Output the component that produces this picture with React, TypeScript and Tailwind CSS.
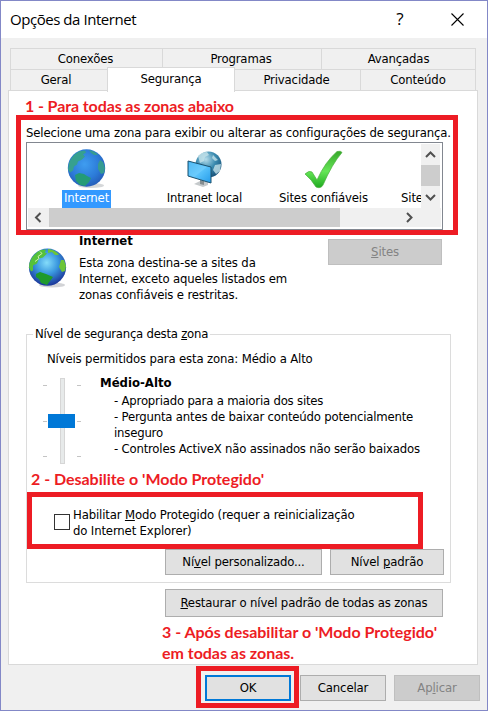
import type { ReactNode } from "react";

const UI = "font-['DejaVu_Sans_Condensed','DejaVu_Sans',sans-serif] [font-stretch:condensed] tracking-[-0.15px]";

function Button({ className, children }: { className: string; children: ReactNode }) {
  return (
    <button className={`flex shrink-0 items-center justify-center whitespace-nowrap border ${className}`}>
      {children}
    </button>
  );
}

function Tab({ className, children }: { className: string; children: ReactNode }) {
  return (
    <div className={`flex h-full items-center justify-center border-[#d9d9d9] ${className}`}>{children}</div>
  );
}

function BlueGlobe() {
  return (
    <svg width="40" height="40" viewBox="0 0 40 40">
      <defs>
        <radialGradient id="sea" cx=".45" cy=".4" r=".65">
          <stop offset="0" stopColor="#3f9df0" />
          <stop offset=".6" stopColor="#2c7bd8" />
          <stop offset="1" stopColor="#2458b4" />
        </radialGradient>
      </defs>
      <ellipse cx="24" cy="36.500" rx="13" ry="2.500" fill="#b9bcc0" opacity=".6" />
      <circle cx="19.500" cy="19" r="18.700" fill="url(#sea)" />
      <path d="M2 14Q5 6 12 2.500l6-1 1 2-3 2 2 2-3 3-4 2-1 3-3 2-1 4-3 2-2-3Z" fill="#36a08f" />
      <path d="M22 1q6 1 9 5l-4 0-3-2ZM33 11l3 2 2 6-1 5-3 1-3-5v-5Z" fill="#359b91" />
      <path d="M8 26l4-2 5 1 3 2 4 2-2 4-4 4-5-1-4-4Z" fill="#249b76" />
    </svg>
  );
}

function GreenGlobe() {
  return (
    <svg width="40" height="40" viewBox="0 0 40 40">
      <defs>
        <radialGradient id="ocean" cx=".48" cy=".38" r=".6">
          <stop offset="0" stopColor="#84dcfa" />
          <stop offset=".5" stopColor="#3a98df" />
          <stop offset="1" stopColor="#1c3a9c" />
        </radialGradient>
      </defs>
      <ellipse cx="24" cy="37" rx="13" ry="2.500" fill="#b4b6ba" opacity=".6" />
      <circle cx="19.500" cy="19.200" r="18.600" fill="url(#ocean)" />
      <path d="M1.500 15Q5 5 13 2l5-.5-1 3 2 1-4 4-4 1-2 5-4 2 0 5-2 1-2-4Z" fill="#55c13b" />
      <path d="M20 1q8 1 11 6l-4 0-3-3-4 1ZM33 12l3 0 2 6-1 5-3 1-3-5Z" fill="#6cc537" />
      <path d="M8 26l4-2 6 2 7 3-3 4-3 4-6-2-2-4-3-2Z" fill="#1f9a2c" />
      <path d="M12 3.500l2 2-4 3 1 2-4 3" fill="none" stroke="#d2eeb0" strokeWidth="1" />
    </svg>
  );
}

function IntranetIcon() {
  return (
    <svg width="36" height="37" viewBox="0 0 36 37">
      <defs>
        <radialGradient id="net" cx=".4" cy=".3" r=".75">
          <stop offset="0" stopColor="#b5dcea" />
          <stop offset=".5" stopColor="#3b8bb0" />
          <stop offset="1" stopColor="#164e76" />
        </radialGradient>
        <linearGradient id="screen" x1="0" y1="0" x2="1" y2="1">
          <stop offset="0" stopColor="#38adf0" />
          <stop offset=".5" stopColor="#5cc5fc" />
          <stop offset="1" stopColor="#249be9" />
        </linearGradient>
      </defs>
      <circle cx="21.500" cy="13.500" r="13" fill="url(#net)" />
      <path d="M11 5q4-4 9-4l2 3-4 2-1 4-4 2ZM26 4l5 5-3 1-3-3ZM28 14l6-1-1 7-4 3-3-4Z" fill="#c4e2ea" opacity=".8" />
      <path d="M7 33l8-4 6 2v3l-5 2Z" fill="#c5c9cb" />
      <path d="M13 29v4l4 1v-4Z" fill="#858d90" />
      <path d="M1 10l23 6v16L1 25Z" fill="url(#screen)" stroke="#1c526f" />
      <path d="M2 11l18 5L7 26l-5-2Z" fill="#9adeff" opacity=".25" />
    </svg>
  );
}

function CheckIcon() {
  return (
    <svg width="39" height="39" viewBox="0 0 39 39">
      <defs>
        <linearGradient id="check" x1="0" y1="0" x2="0" y2="1">
          <stop offset="0" stopColor="#36a72b" />
          <stop offset=".55" stopColor="#66e657" />
          <stop offset="1" stopColor="#1faa20" />
        </linearGradient>
      </defs>
      <path d="M1 24q4-4 7-2l5 8Q21 12 33 1.500q4-1 5 1Q28 14 19 35q-2 4-7 2Q8 30 1 24Z" fill="url(#check)" stroke="#4bae3e" strokeWidth=".7" />
    </svg>
  );
}

function Chevron({ d }: { d: string }) {
  return (
    <svg width="11" height="11" viewBox="0 0 11 11" fill="none" stroke="#505050" strokeWidth="2">
      <path d={d} />
    </svg>
  );
}

function Zone({ className, icon, label, selected }: { className: string; icon: ReactNode; label: string; selected?: boolean }) {
  return (
    <div className={`flex shrink-0 flex-col items-center ${className}`}>
      <div className="flex h-[46px] items-center pt-1">{icon}</div>
      <span className={`h-[18px] whitespace-nowrap px-[2px] leading-[16px] ${selected ? "bg-[#3399ff] text-white" : ""}`}>
        {label}
      </span>
    </div>
  );
}

function ZoneList() {
  return (
    <div className="mt-px ml-[17px] flex h-[88px] w-[417px] flex-col border border-[#828790] bg-white p-px">
      <div className="flex h-[64px]">
        <div className="flex w-[393px] overflow-hidden">
          <Zone className="w-[117px]" icon={<BlueGlobe />} label="Internet" selected />
          <Zone className="w-[119px]" icon={<IntranetIcon />} label="Intranet local" />
          <Zone className="w-[119px]" icon={<CheckIcon />} label="Sites confiáveis" />
          <Zone className="ml-[16px] w-[90px] !items-start" icon={null} label="Sites" />
        </div>
        <div className="flex w-[19px] flex-col bg-[#f0f0f0]">
          <div className="flex h-[21px] items-center justify-center"><Chevron d="M1 8l4.500-4.500L10 8" /></div>
          <div className="h-[21px] bg-[#cdcdcd]" />
          <div className="flex h-[22px] items-center justify-center"><Chevron d="M1 3l4.500 4.500L10 3" /></div>
        </div>
      </div>
      <div className="flex h-[19px] bg-[#f0f0f0]">
        <div className="flex w-[21px] items-center justify-center"><Chevron d="M7.500 1L3 5.500L7.500 10" /></div>
        <div className="w-[291px] bg-[#cdcdcd]" />
        <div className="ml-[60px] flex w-[19px] items-center justify-center"><Chevron d="M3 1l4.500 4.500L3 10" /></div>
      </div>
    </div>
  );
}

function Slider() {
  const tick = "flex h-px w-[38px] justify-between";
  return (
    <div className="relative flex h-[86px] w-[38px] justify-center">
      <div className="h-full w-[5px] border border-[#d6d6d6] bg-[#e7eaea]" />
      {["top-[7px]", "top-[43px]", "top-[78px]"].map((top) => (
        <div key={top} className={`absolute left-0 ${tick} ${top}`}>
          <i className="w-1 bg-[#c4c4c4]" />
          <i className="w-1 bg-[#c4c4c4]" />
        </div>
      ))}
      <div className="absolute top-9 left-[5px] h-[14px] w-[27px] bg-[#0078d7]" />
    </div>
  );
}

export default function App() {
  return (
    <div className={`relative flex h-[711px] w-[488px] flex-col overflow-hidden border border-[#8388c7] bg-[#f0f0f0] text-[13px] leading-4 text-black ${UI}`}>
      <header className="flex h-[37px] shrink-0 items-center bg-white pl-[9px] font-['Open_Sans','Noto_Sans',sans-serif] tracking-normal [font-stretch:normal]">
        <h1 className="flex-1 pb-[2px] text-[15px] tracking-[-0.45px]">Opções da Internet</h1>
        <span className="w-[50px] pb-[2px] text-center text-[17px]">?</span>
        <svg className="mr-[23px] ml-[26px]" width="13" height="13" viewBox="0 0 13 13" stroke="#000" strokeWidth="1.1">
          <path d="M.5.5l12 12M12.500.5L.5 12.500" />
        </svg>
      </header>

      <nav className="mt-[10px] ml-[9px] w-[466px] shrink-0">
        <div className="flex h-[21px] border-x border-t border-[#d9d9d9]">
          <Tab className="w-[151px] pr-[2px]">Conexões</Tab>
          <Tab className="w-[159px] border-l pr-[2px]">Programas</Tab>
          <Tab className="flex-1 border-l">Avançadas</Tab>
        </div>
        <div className="flex h-[21px] border-x border-t border-[#d9d9d9]">
          <Tab className="w-[96px] pr-[6px]">Geral</Tab>
          <Tab className="z-10 -mt-[3px] !h-[25px] w-[128px] border-x border-t bg-white pb-[2px]">Segurança</Tab>
          <Tab className="w-[125px] pr-[2px]">Privacidade</Tab>
          <Tab className="flex-1 border-l">Conteúdo</Tab>
        </div>
      </nav>

      <main className="ml-[7px] h-[575px] w-[470px] shrink-0 border border-[#d9d9d9] bg-white">
        <p className="mt-[34px] ml-[17px] tracking-[-0.14px] whitespace-nowrap">Selecione uma zona para exibir ou alterar as configurações de segurança.</p>
        <ZoneList />

        <section className="ml-[19px] flex h-[104px]">
          <div className="mt-[18px] w-[51px]"><GreenGlobe /></div>
          <div className="mt-[3px] w-[249px] whitespace-nowrap">
            <h2 className="font-bold tracking-normal">Internet</h2>
            <p className="mt-[6px]">
              Esta zona destina-se a sites da<br />Internet, exceto aqueles listados em<br />zonas confiáveis e restritas.
            </p>
          </div>
          <Button className="mt-[9px] h-[26px] w-[114px] border-[#bfbfbf] bg-[#cccccc] text-[#838383]">
            <span><u>S</u>ites</span>
          </Button>
        </section>

        <section className="ml-[17px] h-[249px] w-[425px] border border-[#dcdcdc]">
          <h3 className="-mt-[9px] ml-[6px] w-fit bg-white px-[2px] tracking-[-0.25px]">Nível de segurança desta <u>z</u>ona</h3>
          <p className="mt-[9px] ml-[20px]">Níveis permitidos para esta zona: Médio a Alto</p>
          <div className="mt-[8px] ml-[16px] flex h-[114px]">
            <div className="mt-[3px]"><Slider /></div>
            <div className="ml-[19px] whitespace-nowrap">
              <h4 className="font-bold tracking-normal">Médio-Alto</h4>
              <p className="mt-[2px] ml-[14px] tracking-[-0.2px]">
                - Apropriado para a maioria dos sites<br />- Pergunta antes de baixar conteúdo potencialmente<br />inseguro<br />- Controles ActiveX não assinados não serão baixados
              </p>
            </div>
          </div>
          <label className="mt-[17px] ml-[27px] flex h-[43px] whitespace-nowrap">
            <span className="mt-[8px] mr-[3px] size-4 border border-[#333]" />
            <span className="mt-px">Habilitar <u>M</u>odo Protegido (requer a reinicialização<br />do Internet Explorer)</span>
          </label>
          <div className="ml-[138px] flex gap-2">
            <Button className="h-[26px] w-[157px] border-[#adadad] bg-[#e1e1e1]"><span>Ní<u>v</u>el personalizado...</span></Button>
            <Button className="h-[26px] w-[114px] border-[#adadad] bg-[#e1e1e1]"><span>Nível <u>p</u>adrão</span></Button>
          </div>
        </section>

        <Button className="mt-[6px] ml-[156px] h-[28px] w-[278px] border-[#adadad] bg-[#e1e1e1]">
          <span><u>R</u>estaurar o nível padrão de todas as zonas</span>
        </Button>
      </main>

      <footer className="mt-[10px] ml-[204px] flex">
        <Button className="h-[26px] w-[86px] border-2 border-[#0078d7] bg-[#e1e1e1]">OK</Button>
        <Button className="ml-[9px] h-[26px] w-[86px] border-[#adadad] bg-[#e1e1e1]">Cancelar</Button>
        <Button className="ml-[8px] h-[26px] w-[86px] border-[#bfbfbf] bg-[#cccccc] text-[#838383]"><span>Ap<u>l</u>icar</span></Button>
      </footer>

      <div className="pointer-events-none absolute -inset-px z-20 font-['Lato',sans-serif] text-[16px] font-bold tracking-[-0.02px] whitespace-nowrap text-[#ed1c24] [font-stretch:normal]">
        <div className="absolute top-[115px] left-[16px] h-[120px] w-[442px] border-5 border-[#ed1c24]" />
        <div className="absolute top-[492px] left-[27px] h-[57px] w-[396px] border-5 border-[#ed1c24]" />
        <div className="absolute top-[666px] left-[196px] h-[42px] w-[103px] border-5 border-[#ed1c24]" />
        <p className="absolute top-[95px] left-[25px] leading-[21px] tracking-[-0.1px]">1 - Para todas as zonas abaixo</p>
        <p className="absolute top-[468px] left-[31px] leading-[21px]">2 - Desabilite o 'Modo Protegido'</p>
        <p className="absolute top-[621px] left-[162px] leading-[21px]">3 - Após desabilitar o 'Modo Protegido'<br />em todas as zonas.</p>
      </div>
    </div>
  );
}
